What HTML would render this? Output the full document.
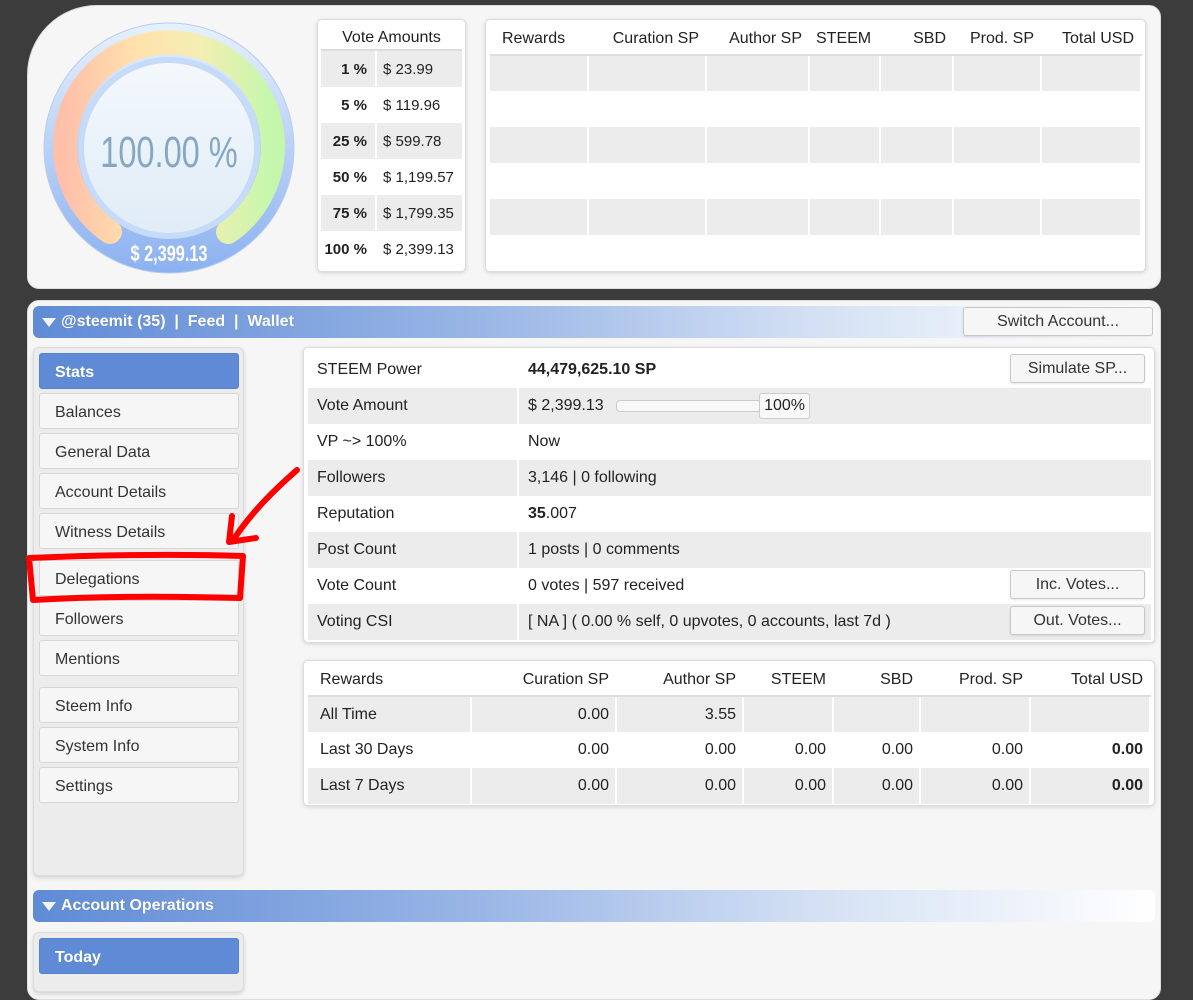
<!DOCTYPE html>
<html><head><meta charset="utf-8"><style>
*{box-sizing:border-box;margin:0;padding:0}
body{width:1193px;height:978px;background:#3c3c3c;font-family:"Liberation Sans",Arial,sans-serif;font-size:16px;color:#222;position:relative;overflow:hidden}
.abs{position:absolute}
.panel{background:#f6f6f6;border:1px solid #ddd}
.box{background:#fff;border:1px solid #ddd;border-radius:5px;box-shadow:0 1px 4px rgba(0,0,0,.15)}
table{border-collapse:collapse}
.bar{background:linear-gradient(90deg,#5f8bd6 0%,#9ab6e6 40%,#d4e1f4 70%,#fff 100%);color:#fff;font-weight:bold;border-radius:6px;height:32px;line-height:31px;padding-left:28px;font-size:16px;text-shadow:0 0 1px #5a7ab0}
.bar:before{content:"";position:absolute;left:9px;top:12px;border-left:7px solid transparent;border-right:7px solid transparent;border-top:9px solid #f4f4f4}
.side{background:#ececec;border:1px solid #ddd;border-radius:6px;box-shadow:0 2px 4px rgba(0,0,0,.15)}
.item{position:absolute;left:5px;width:200px;height:36px;background:#f6f6f6;border:1px solid #d6d6d6;border-radius:3px;padding-left:15px;line-height:37px;color:#333}
.item.act{background:#5f8bd6;color:#fff;font-weight:bold;border-color:#5582d0}
.btn{position:absolute;background:#f6f6f6;border:1px solid #c8c8c8;border-radius:3px;text-align:center;line-height:28px;color:#333;box-shadow:0 1px 2px rgba(0,0,0,.1)}
.st td{height:36px;padding-left:9px;border-bottom:0;white-space:nowrap}
.st tr:nth-child(even) td{background:#ececec}
.st td:first-child{width:210px;border-right:2px solid #fff}
.rw td,.rw th{height:36px;padding:0 6px;text-align:right;border-right:2px solid #fff;font-weight:normal;white-space:nowrap}
.rw td:first-child,.rw th:first-child{text-align:left;padding-left:12px}
.rw tr:nth-child(even) td{background:#ececec}
.rw th{border-bottom:2px solid #ddd;height:32px}
.va td{height:36px;border-bottom:0;white-space:nowrap}
.va tr:nth-child(odd) td{background:#ececec}
</style></head><body>

<div class="abs panel" style="left:27px;top:5px;width:1134px;height:284px;border-radius:70px 12px 12px 12px"></div>

<svg class="abs" style="left:40px;top:20px" width="260" height="260" viewBox="40 20 260 260">
<defs>
<linearGradient id="ob" x1="0" y1="0" x2="0" y2="1"><stop offset="0" stop-color="#e6f1fd"/><stop offset="1" stop-color="#8cb1f0"/></linearGradient>
<linearGradient id="ar" x1="0" y1="0" x2="1" y2="0"><stop offset="0" stop-color="#ffc0aa"/><stop offset=".35" stop-color="#ffe2ac"/><stop offset=".65" stop-color="#f4eeb2"/><stop offset="1" stop-color="#c4f7ac"/></linearGradient>
<linearGradient id="in" x1="0" y1="0" x2="0" y2="1"><stop offset="0" stop-color="#f4f8fd"/><stop offset="1" stop-color="#e0ecf6"/></linearGradient>
</defs>
<circle cx="169" cy="148" r="125" fill="url(#ob)" stroke="#b8cdef" stroke-width="1"/>
<path d="M110 232 A104 104 0 1 1 228 232" fill="none" stroke="url(#ar)" stroke-width="24" stroke-linecap="round"/>
<circle cx="169" cy="148" r="91" fill="#c6dbf7"/>
<circle cx="169" cy="148" r="85" fill="url(#in)"/>
<text x="169" y="167" text-anchor="middle" font-family="Liberation Sans Narrow,Liberation Sans,sans-serif" font-size="44" fill="#86a7c4" transform="translate(169 0) scale(.74 1) translate(-169 0)">100.00 %</text>
<text x="169" y="261" text-anchor="middle" font-family="Liberation Sans Narrow,Liberation Sans,sans-serif" font-weight="bold" font-size="22" fill="#fff" transform="translate(169 0) scale(.74 1) translate(-169 0)">$ 2,399.13</text>
</svg>

<div class="abs box" style="left:317px;top:19px;width:149px;height:253px;padding:3px 3px">
<div style="text-align:center;height:28px;line-height:30px;border-bottom:2px solid #ddd">Vote Amounts</div>
<table class="va" style="width:141px;font-size:15px">
<tr><td style="text-align:right;padding-right:8px;font-weight:bold;width:55px;border-right:2px solid #fff">1 %</td><td style="padding-left:6px">$ 23.99</td></tr>
<tr><td style="text-align:right;padding-right:8px;font-weight:bold;border-right:2px solid #fff">5 %</td><td style="padding-left:6px">$ 119.96</td></tr>
<tr><td style="text-align:right;padding-right:8px;font-weight:bold;border-right:2px solid #fff">25 %</td><td style="padding-left:6px">$ 599.78</td></tr>
<tr><td style="text-align:right;padding-right:8px;font-weight:bold;border-right:2px solid #fff">50 %</td><td style="padding-left:6px">$ 1,199.57</td></tr>
<tr><td style="text-align:right;padding-right:8px;font-weight:bold;border-right:2px solid #fff">75 %</td><td style="padding-left:6px">$ 1,799.35</td></tr>
<tr><td style="text-align:right;padding-right:8px;font-weight:bold;border-right:2px solid #fff">100 %</td><td style="padding-left:6px">$ 2,399.13</td></tr>
</table></div>

<div class="abs box" style="left:485px;top:19px;width:661px;height:253px;padding:3px 4px">
<table class="rw" style="width:652px">
<tr><th style="width:98px">Rewards</th><th style="width:118px">Curation SP</th><th style="width:103px">Author SP</th><th style="width:71px;text-align:left">STEEM</th><th style="width:73px">SBD</th><th style="width:88px">Prod. SP</th><th>Total USD</th></tr>
<tr><td style="background:#ececec"></td><td style="background:#ececec"></td><td style="background:#ececec"></td><td style="background:#ececec"></td><td style="background:#ececec"></td><td style="background:#ececec"></td><td style="background:#ececec"></td></tr>
<tr><td></td><td></td><td></td><td></td><td></td><td></td><td></td></tr>
<tr><td style="background:#ececec"></td><td style="background:#ececec"></td><td style="background:#ececec"></td><td style="background:#ececec"></td><td style="background:#ececec"></td><td style="background:#ececec"></td><td style="background:#ececec"></td></tr>
<tr><td></td><td></td><td></td><td></td><td></td><td></td><td></td></tr>
<tr><td style="background:#ececec"></td><td style="background:#ececec"></td><td style="background:#ececec"></td><td style="background:#ececec"></td><td style="background:#ececec"></td><td style="background:#ececec"></td><td style="background:#ececec"></td></tr>
<tr><td></td><td></td><td></td><td></td><td></td><td></td><td></td></tr>
</table></div>

<div class="abs panel" style="left:27px;top:300px;width:1134px;height:700px;border-radius:12px"></div>

<div class="abs bar" style="left:33px;top:306px;width:1122px">@steemit (35) &nbsp;|&nbsp; Feed &nbsp;|&nbsp; Wallet</div>
<div class="btn" style="left:963px;top:307px;width:190px;height:29px;line-height:27px">Switch Account...</div>

<div class="abs side" style="left:33px;top:347px;width:211px;height:529px">
<div class="item act" style="top:5px">Stats</div>
<div class="item" style="top:45px">Balances</div>
<div class="item" style="top:85px">General Data</div>
<div class="item" style="top:125px">Account Details</div>
<div class="item" style="top:165px">Witness Details</div>
<div class="item" style="top:212px">Delegations</div>
<div class="item" style="top:252px">Followers</div>
<div class="item" style="top:292px">Mentions</div>
<div class="item" style="top:339px">Steem Info</div>
<div class="item" style="top:379px">System Info</div>
<div class="item" style="top:419px">Settings</div>
</div>

<div class="abs box" style="left:303px;top:347px;width:852px;height:296px;padding:4px 4px">
<table class="st" style="width:843px">
<tr><td>STEEM Power</td><td style="font-weight:bold">44,479,625.10 SP</td></tr>
<tr><td>Vote Amount</td><td>$ 2,399.13 <span style="display:inline-block;vertical-align:middle;margin-left:8px;width:145px;height:12px;border:1px solid #ccc;border-radius:4px;background:#f8f8f8"></span><span style="display:inline-block;vertical-align:middle;border:1px solid #ccc;border-radius:3px;background:#f8f8f8;padding:0 4px;line-height:24px;margin-left:-2px">100%</span></td></tr>
<tr><td>VP ~&gt; 100%</td><td>Now</td></tr>
<tr><td>Followers</td><td>3,146 | 0 following</td></tr>
<tr><td>Reputation</td><td><b>35</b>.007</td></tr>
<tr><td>Post Count</td><td>1 posts | 0 comments</td></tr>
<tr><td>Vote Count</td><td>0 votes | 597 received</td></tr>
<tr><td>Voting CSI</td><td>[ NA ] ( 0.00 % self, 0 upvotes, 0 accounts, last 7d )</td></tr>
</table></div>
<div class="btn" style="left:1010px;top:354px;width:135px;height:29px">Simulate SP...</div>
<div class="btn" style="left:1010px;top:570px;width:135px;height:29px">Inc. Votes...</div>
<div class="btn" style="left:1010px;top:606px;width:135px;height:29px">Out. Votes...</div>

<div class="abs box" style="left:303px;top:660px;width:852px;height:146px;padding:3px 4px">
<table class="rw" style="width:843px">
<tr><th style="width:163px">Rewards</th><th style="width:145px">Curation SP</th><th style="width:127px">Author SP</th><th style="width:90px">STEEM</th><th style="width:87px">SBD</th><th style="width:110px">Prod. SP</th><th>Total USD</th></tr>
<tr><td>All Time</td><td>0.00</td><td>3.55</td><td></td><td></td><td></td><td></td></tr>
<tr><td>Last 30 Days</td><td>0.00</td><td>0.00</td><td>0.00</td><td>0.00</td><td>0.00</td><td><b>0.00</b></td></tr>
<tr><td>Last 7 Days</td><td>0.00</td><td>0.00</td><td>0.00</td><td>0.00</td><td>0.00</td><td><b>0.00</b></td></tr>
</table></div>

<div class="abs bar" style="left:33px;top:890px;width:1122px">Account Operations</div>
<div class="abs side" style="left:33px;top:932px;width:211px;height:60px">
<div class="item act" style="top:5px">Today</div>
</div>

<svg class="abs" style="left:0;top:0" width="1193" height="978">
<path d="M297 470 C272 492 252 512 233 540" fill="none" stroke="#ff0000" stroke-width="6" stroke-linecap="round"/>
<path d="M232 516 L229 542 L256 538" fill="none" stroke="#ff0000" stroke-width="6" stroke-linecap="round" stroke-linejoin="round"/>
<path d="M29 558 C100 555 180 554 243 556 L240 598 C170 596 100 596 33 600 Z" fill="none" stroke="#ff0000" stroke-width="6" stroke-linejoin="round"/>
</svg>
</body></html>
